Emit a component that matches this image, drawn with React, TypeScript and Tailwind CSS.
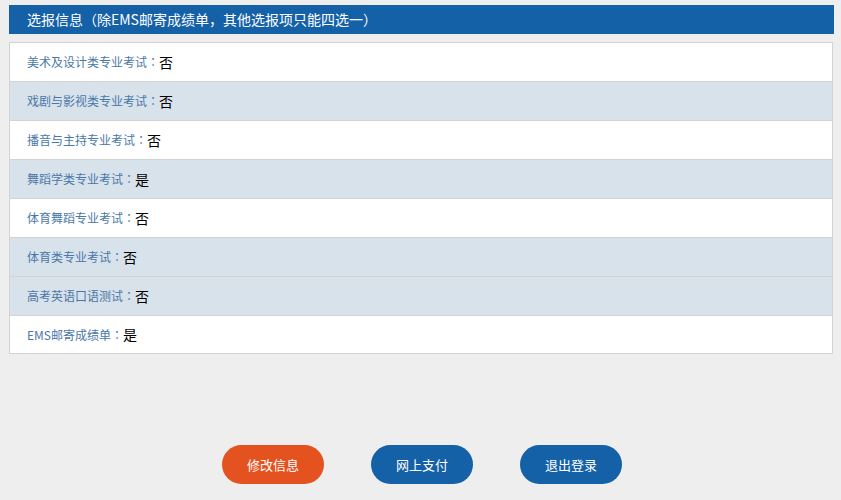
const rows = [
  { label: "美术及设计类专业考试", value: "否", shaded: false },
  { label: "戏剧与影视类专业考试", value: "否", shaded: true },
  { label: "播音与主持专业考试", value: "否", shaded: false },
  { label: "舞蹈学类专业考试", value: "是", shaded: true },
  { label: "体育舞蹈专业考试", value: "否", shaded: false },
  { label: "体育类专业考试", value: "否", shaded: true },
  { label: "高考英语口语测试", value: "否", shaded: true },
  { label: "EMS邮寄成绩单", value: "是", shaded: false },
];

const punct = { fontFamily: '"Noto Sans CJK TC", sans-serif' };

export default function App() {
  return (
    <div
      className="w-[841px] h-[500px] bg-[#eeeeee] pl-[9px] pr-[8px] pt-[5px] overflow-hidden"
      style={{ fontFamily: '"Noto Sans CJK SC", "Liberation Sans", sans-serif' }}
    >
      <div className="h-[29px] bg-[#1461a7] text-white text-[14px] leading-[29px] pl-[18px] mr-[-1px]">
        选报信息<span style={punct}>（</span>除EMS邮寄成绩单，其他选报项只能四选一<span style={punct}>）</span>
      </div>

      <div className="mt-[8px] border border-[#d3d3d3] bg-white">
        {rows.map((row, index) => (
          <div
            key={index}
            className={
              "h-[39px] flex items-center pl-[17px] border-b border-[#d3d3d3] last:border-b-0 last:h-[37px] " +
              (row.shaded ? "bg-[#d8e2eb]" : "bg-white")
            }
          >
            <span className="text-[12px] text-[#4a78a8]">
              {row.label}
              <span style={punct}>：</span>
            </span>
            <span className="text-[14px] text-black">{row.value}</span>
          </div>
        ))}
      </div>

      <div className="mt-[91px] flex justify-center gap-[47px] pl-[2px]">
        <button className="w-[102px] h-[39px] rounded-full bg-[#e4521f] text-white text-[13px]">
          修改信息
        </button>
        <button className="w-[102px] h-[39px] rounded-full bg-[#1461a7] text-white text-[13px]">
          网上支付
        </button>
        <button className="w-[102px] h-[39px] rounded-full bg-[#1461a7] text-white text-[13px]">
          退出登录
        </button>
      </div>
    </div>
  );
}
